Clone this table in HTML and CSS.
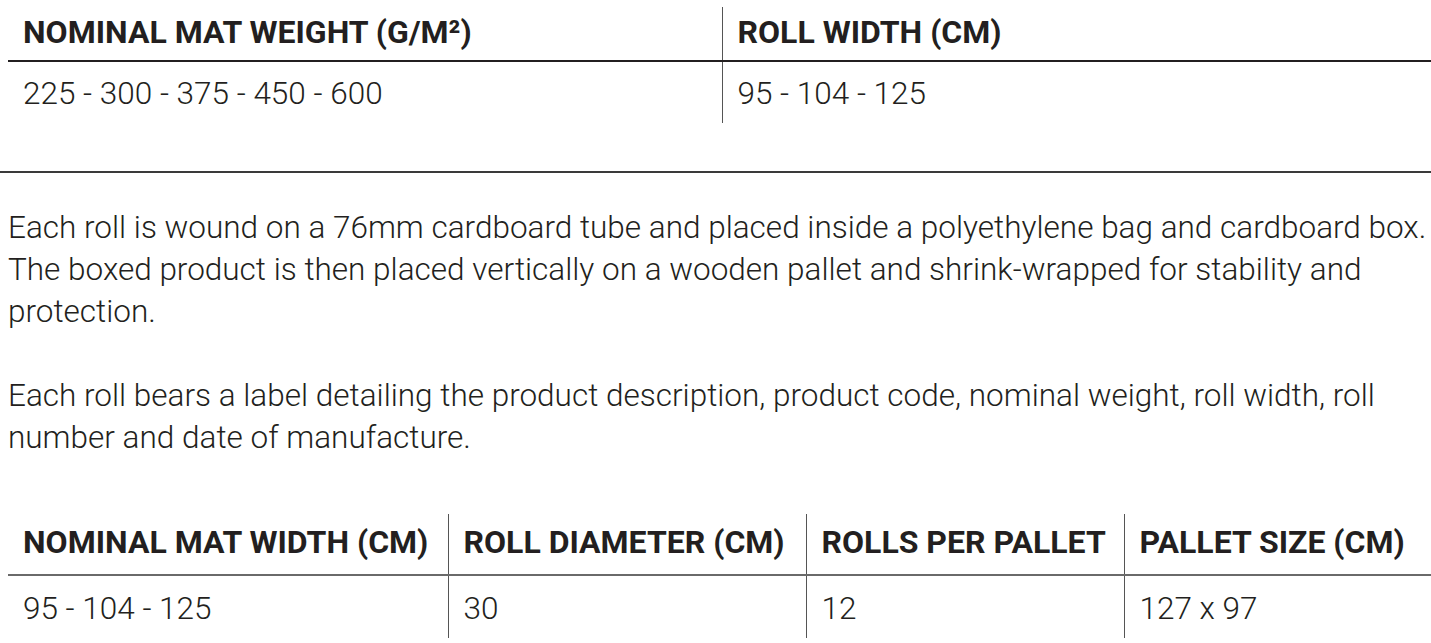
FILE: index.html
```html
<!DOCTYPE html>
<html>
<head>
<meta charset="utf-8">
<link rel="stylesheet" href="styles.css">
</head>
<body>
<div class="page">
  <table class="spec spec-top">
    <colgroup><col class="t1"><col class="t2"></colgroup>
    <thead>
      <tr><th>NOMINAL MAT WEIGHT (G/M²)</th><th>ROLL WIDTH (CM)</th></tr>
    </thead>
    <tbody>
      <tr><td>225 - 300 - 375 - 450 - 600</td><td>95 - 104 - 125</td></tr>
    </tbody>
  </table>
  <hr class="rule">
  <div class="text">
    <p>Each roll is wound on a 76mm cardboard tube and placed inside a polyethylene bag and cardboard box. The boxed product is then placed vertically on a wooden pallet and shrink-wrapped for stability and protection.</p>
    <p>Each roll bears a label detailing the product description, product code, nominal weight, roll width, roll number and date of manufacture.</p>
  </div>
  <table class="spec spec-bottom">
    <colgroup><col class="w1"><col class="w2"><col class="w3"><col class="w4"></colgroup>
    <thead>
      <tr><th>NOMINAL MAT WIDTH (CM)</th><th>ROLL DIAMETER (CM)</th><th>ROLLS PER PALLET</th><th>PALLET SIZE (CM)</th></tr>
    </thead>
    <tbody>
      <tr><td>95 - 104 - 125</td><td>30</td><td>12</td><td>127 x 97</td></tr>
    </tbody>
  </table>
</div>
</body>
</html>
```
FILE: styles.css
```css
html, body { margin: 0; padding: 0; background: #fff; }
body { font-family: Roboto, "Liberation Sans", sans-serif; color: #231f20; }
.page { padding-top: 7px; }
.spec { border-collapse: collapse; margin-left: 8px; width: 1423px; table-layout: fixed; }
.spec th { font-weight: 700; font-size: 32px; text-align: left; padding: 0 0 4px 15px; white-space: nowrap; vertical-align: middle; }
.spec td { font-weight: 300; font-size: 31.5px; text-align: left; padding: 2px 0 0 15px; white-space: nowrap; vertical-align: middle; }
.spec th + th, .spec td + td { border-left: 1px solid #555; }
.spec-top .t1 { width: 714px; }
.spec-top th { height: 49px; border-bottom: 2px solid #231f20; }
.spec-top td { height: 59px; }
.rule { margin: 48px 0 0; border: 0; border-top: 2px solid #3a3a3a; height: 0; }
.text { padding: 0 0 0 8px; margin-top: 34px; }
.text p { font-size: 31.5px; font-weight: 300; line-height: 42px; margin: 0 0 42px; }
.text p:last-child { margin-bottom: 0; }
.spec-bottom { margin-top: 55px; }
.spec-bottom .w1 { width: 440px; }
.spec-bottom .w2 { width: 358px; }
.spec-bottom .w3 { width: 318px; }
.spec-bottom th { height: 56px; border-bottom: 2px solid #6a6a6a; }
.spec-bottom td { height: 60px; }
```
